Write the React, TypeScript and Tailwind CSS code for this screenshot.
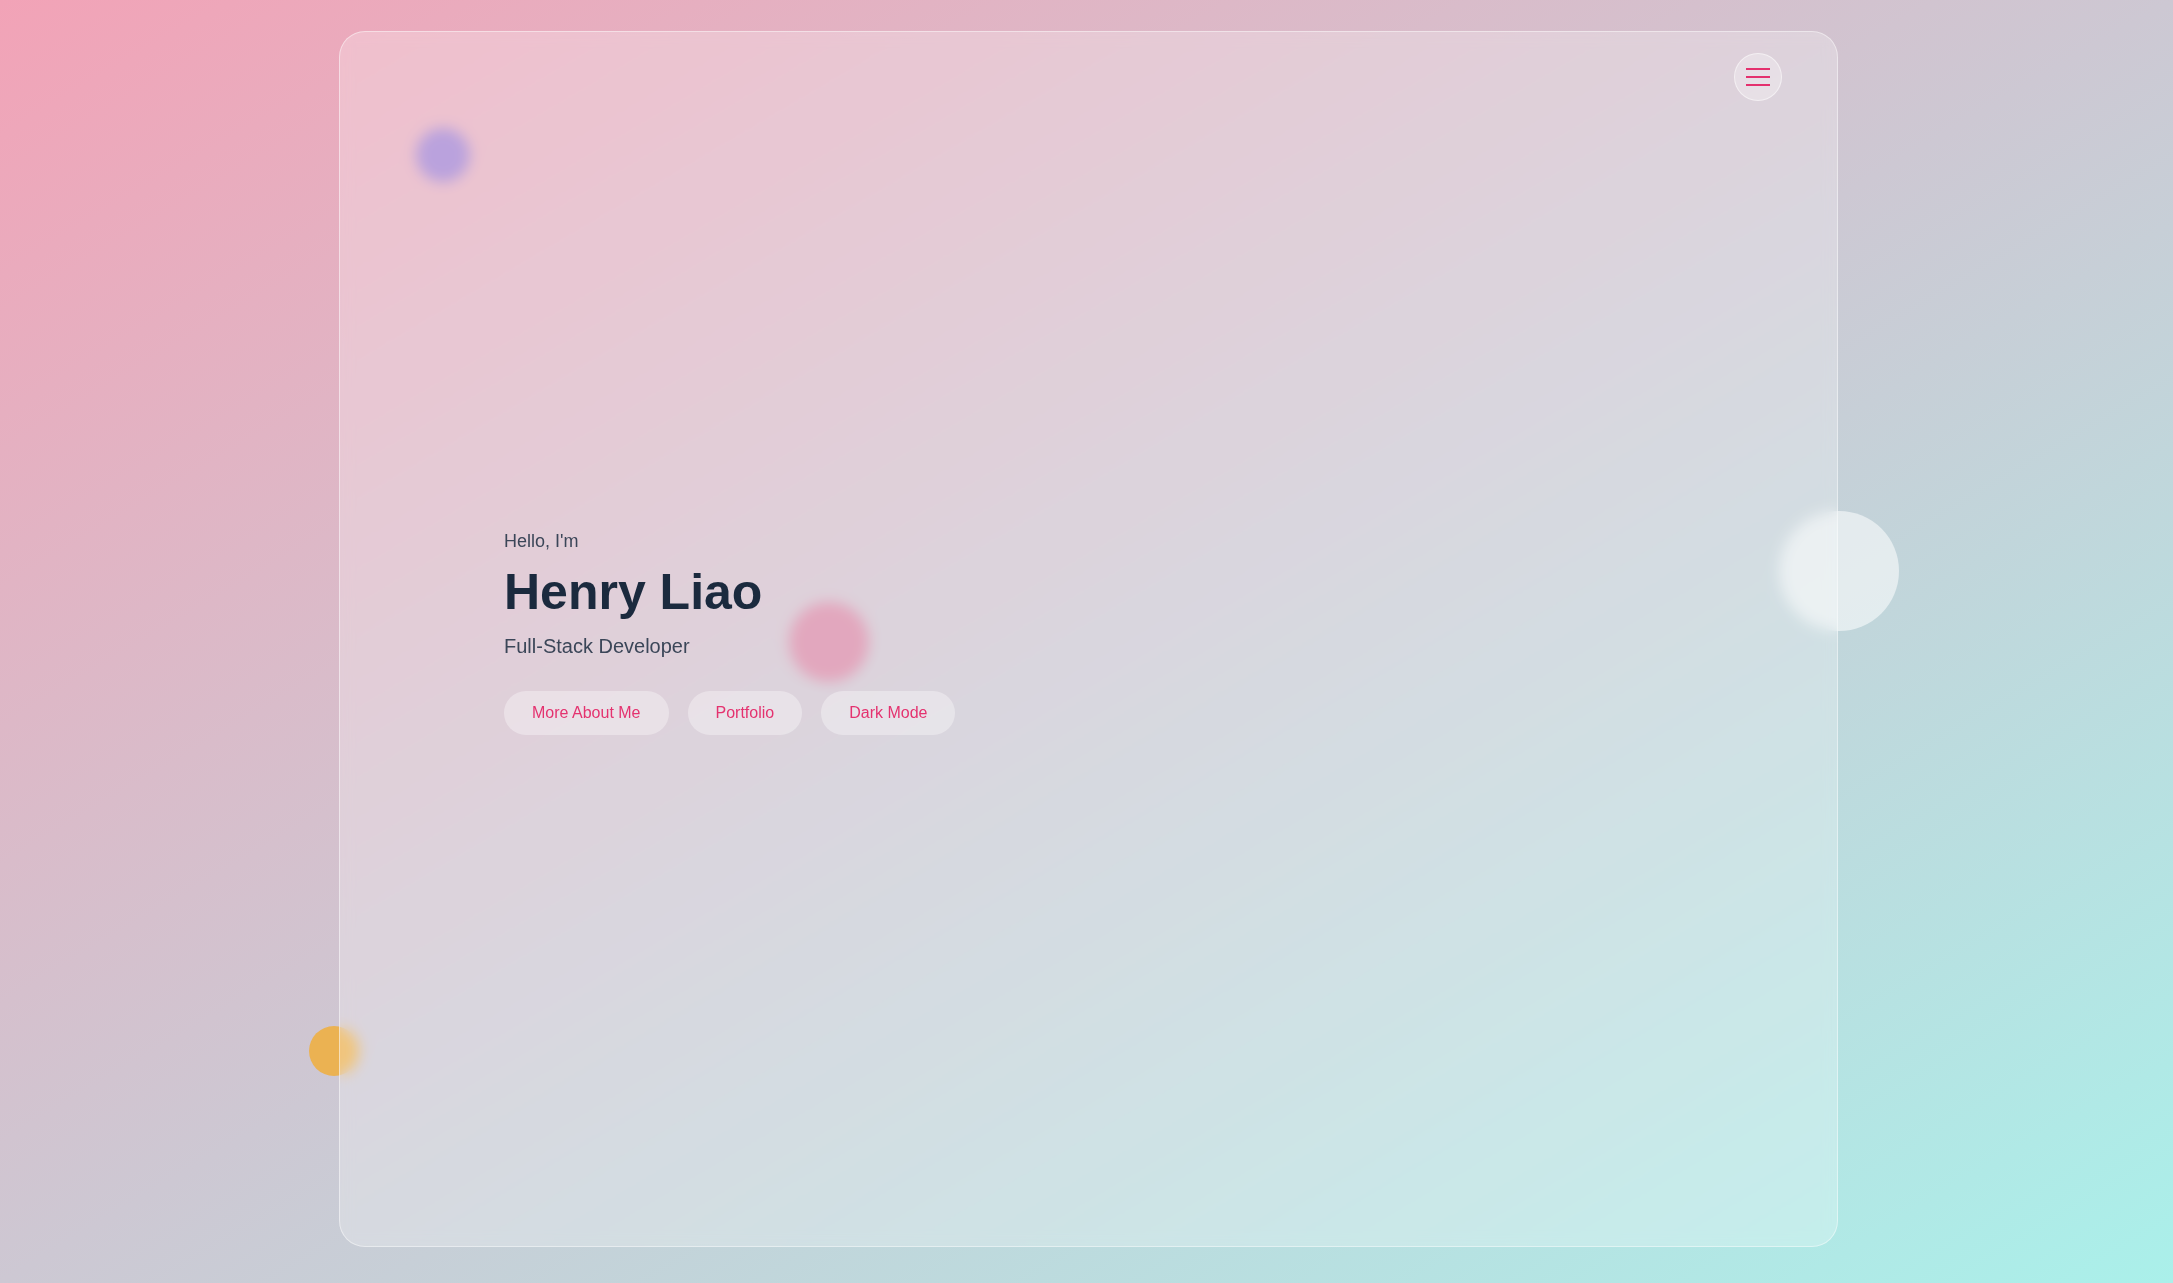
import React from "react";

const blobs = [
  { cls: "left-[416px] top-[128px] h-[54px] w-[54px] bg-[#a383d2]" },
  { cls: "left-[789px] top-[602px] h-[80px] w-[80px] bg-[#d98aa8]" },
  { cls: "left-[309px] top-[1026px] h-[50px] w-[50px] bg-[#ebb252]" },
  { cls: "left-[1779px] top-[511px] h-[120px] w-[120px] bg-white/55" },
];

export default function App() {
  const links = ["More About Me", "Portfolio", "Dark Mode"];

  return (
    <div
      className="relative h-[1283px] w-full overflow-hidden bg-[linear-gradient(to_bottom_right,#f2a3b7_0%,#cdc8d3_50%,#aaf0ea_100%)]"
      style={{ fontFamily: '"Liberation Sans", Arial, sans-serif' }}
    >
      {/* floating shapes behind the glass card */}
      {blobs.map((b, i) => (
        <div key={i} className={`absolute rounded-full ${b.cls}`} />
      ))}

      <div className="relative pl-[339px] pt-[31px]">
        <div className="flex h-[1216px] w-[1499px] flex-col rounded-[26px] border border-white/45 bg-white/25 backdrop-blur-[7px]">
          <div className="flex justify-end pr-[55px] pt-[21px]">
            <button className="flex h-12 w-12 flex-col items-center justify-center gap-[6px] rounded-full border border-white/50 bg-white/30">
              <span className="block h-[2px] w-6 bg-[#e4306e]" />
              <span className="block h-[2px] w-6 bg-[#e4306e]" />
              <span className="block h-[2px] w-6 bg-[#e4306e]" />
            </button>
          </div>

          <main className="flex flex-1 flex-col justify-center pb-[84px] pl-[164px]">
            <p className="text-[18px] leading-[27px] text-[#3b4658]">Hello, I'm</p>
            <h1 className="mt-[7px] text-[50px] font-bold leading-[60px] text-[#1b2a3e]">
              Henry Liao
            </h1>
            <p className="mt-[9px] text-[20px] leading-[30px] text-[#3b4658]">
              Full-Stack Developer
            </p>
            <div className="mt-[30px] flex gap-[19px]">
              {links.map((l) => (
                <a
                  key={l}
                  href="#"
                  className="rounded-full bg-white/35 px-7 py-2.5 text-[16px] leading-6 text-[#e4326f]"
                >
                  {l}
                </a>
              ))}
            </div>
          </main>
        </div>
      </div>
    </div>
  );
}
